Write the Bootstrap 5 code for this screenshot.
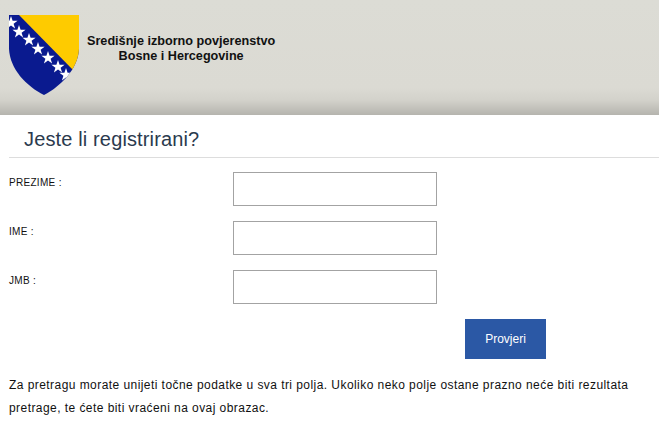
<!DOCTYPE html>
<html lang="hr">
<head>
<meta charset="utf-8">
<title>Jeste li registrirani?</title>
<link rel="stylesheet" href="https://cdn.jsdelivr.net/npm/bootstrap@5.3.0/dist/css/bootstrap.min.css">
<style>
html,body{height:100%;overflow:hidden;background:#fff}
body{font-family:"Liberation Sans",Arial,sans-serif;color:#000}
.site-head{height:115px;background:linear-gradient(to bottom,#dcdcd5 0,#dbdad3 88px,#d3d2cb 100px,#b5b4ae 115px);padding:15px 0 0 9px}
.crest{width:70px;height:81px;flex:none;display:block}
.org-name{font-size:12.65px;line-height:15px;font-weight:700;text-align:center;margin:19px 0 0 8px;color:#111}
.form-title{font-size:20px;line-height:23px;color:#2b3a4e;font-weight:400;margin:0 0 0 9px;padding:13px 0 6px 15px;border-bottom:1px solid #ddd;letter-spacing:.14px}
.form-area{padding:14px 0 0 9px}
.field-row{height:34px;margin-bottom:15px}
.field-label{width:224px;font-size:10px;line-height:12px;letter-spacing:.3px;padding-top:5px;margin:0;color:#111}
.field-input{width:204px;height:34px;border:1px solid #a3a3a3;border-radius:0;background:#fff;padding:4px 8px;font-size:12px}
.check-row{padding-left:456px}
.check-btn{width:81px;height:40px;border:0;border-radius:0;background:#2b58a5;color:#fff;font-size:12px;line-height:14px;padding:0}
.check-btn:hover{background:#2b58a5;color:#fff}
.info-note{font-size:12px;line-height:23px;letter-spacing:.44px;margin:15px 0 0;color:#111;padding-right:10px}
</style>
</head>
<body>
<header class="site-head d-flex align-items-start">
<svg class="crest" viewBox="0 0 70 81" aria-hidden="true">
<defs>
<clipPath id="shield"><path d="M0 0H70V34C69 54 52 71 35 80C17 71 1 54 0 34Z"/></clipPath>
<polygon id="star" points="14,20 15.600,24.700 20.600,24.800 16.600,27.700 18.100,32.500 14,29.600 9.900,32.500 11.400,27.700 7.400,24.800 12.400,24.700"/>
</defs>
<g clip-path="url(#shield)">
<rect width="70" height="81" fill="#0a1a8f"/>
<path d="M10 0H70V56H65Z" fill="#fecb00"/>
<g fill="#fff">
<use href="#star" x="-12" y="-19"/>
<use href="#star" x="-4" y="-10"/>
<use href="#star" x="6" y="-2"/>
<use href="#star" x="15" y="7"/>
<use href="#star" x="25" y="16"/>
<use href="#star" x="35" y="25"/>
<use href="#star" x="43" y="33"/>
</g>
</g>
</svg>
<div class="org-name">Središnje izborno povjerenstvo<br>Bosne i Hercegovine</div>
</header>
<main>
<h1 class="form-title">Jeste li registrirani?</h1>
<form class="form-area">
<div class="field-row d-flex align-items-start"><label class="field-label" for="prezime">PREZIME :</label><input class="field-input" id="prezime" type="text"></div>
<div class="field-row d-flex align-items-start"><label class="field-label" for="ime">IME :</label><input class="field-input" id="ime" type="text"></div>
<div class="field-row d-flex align-items-start"><label class="field-label" for="jmb">JMB :</label><input class="field-input" id="jmb" type="text"></div>
<div class="check-row"><button type="button" class="btn check-btn">Provjeri</button></div>
<p class="info-note">Za pretragu morate unijeti točne podatke u sva tri polja. Ukoliko neko polje ostane prazno neće biti rezultata pretrage, te ćete biti vraćeni na ovaj obrazac.</p>
</form>
</main>
<script src="https://cdn.jsdelivr.net/npm/bootstrap@5.3.0/dist/js/bootstrap.bundle.min.js"></script>
</body>
</html>
